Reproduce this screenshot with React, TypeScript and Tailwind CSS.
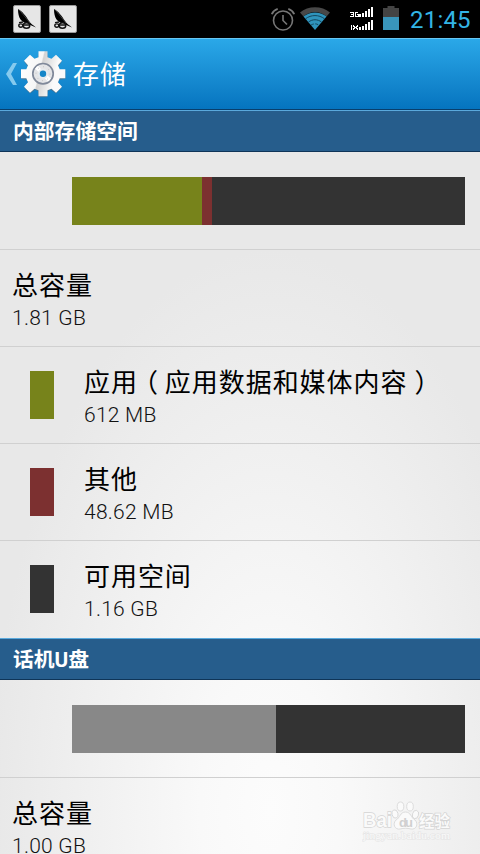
import type { ReactNode } from "react";

const CJK = "font-['Roboto','Noto_Sans_CJK_SC',sans-serif]";

function AppBadge() {
  return (
    <div className="w-7 h-7 rounded-[2px] border border-[#9a9a9a] bg-[#e6e6e6]">
      <svg viewBox="0 0 26 26" className="w-[26px] h-[26px]">
        <path d="M4 3C8 5 12 10 15 15C17 18 19 19 22 21.500L14 18C7 16 4 12 4 3Z" fill="#000" />
        <path d="M5 3.500L16 17" stroke="#777" strokeWidth="0.500" />
        <g fill="#e6e6e6" stroke="#111" strokeWidth="1.400">
          <ellipse cx="6.800" cy="19.600" rx="2" ry="1.700" />
          <ellipse cx="12.500" cy="19.500" rx="3.300" ry="2.800" />
          <path d="M10 19h5M5 16.600l4-.600" />
        </g>
      </svg>
    </div>
  );
}

function AlarmIcon() {
  return (
    <svg viewBox="0 0 24 24" width="24" height="24" fill="none" stroke="#777" strokeWidth="1.600">
      <circle cx="12" cy="13.500" r="9.500" />
      <path d="M12 8v5.500l4 4" />
      <path d="M0.800 7.200C1.800 4.700 3.800 2.700 6.700 1.800M23.200 7.200C22.200 4.700 20.200 2.700 17.300 1.800" strokeWidth="1.900" />
    </svg>
  );
}

function WifiIcon() {
  return (
    <svg viewBox="0 0 30 23" width="30" height="23">
      <path d="M0 5.500C8-1.600 22-1.600 30 5.500L26.500 9.500C20 3.500 10 3.500 3.500 9.500Z" fill="#484848" />
      <path d="M3.500 9.500C10.500 4 19.500 4 26.500 9.500L15 23Z" fill="#2f94bc" />
      <g fill="none" stroke="#14465c" strokeWidth="1">
        <path d="M5.500 11.800C11 7.500 19 7.500 24.500 11.800M8.500 15C12.500 12 17.500 12 21.500 15" />
        <path d="M11 18.200C13.400 16.400 16.600 16.400 19 18.200" strokeDasharray="3 1.500" />
      </g>
    </svg>
  );
}

function Signal({ label, y }: { label: ReactNode; y: number }) {
  return (
    <g transform={`translate(0 ${y})`} shapeRendering="crispEdges">
      {label}
      {[3, 4, 6, 8, 10].map((h, i) => (
        <rect key={h} x={9 + i * 3} y={10 - h} width="2" height={h} fill="#fff" />
      ))}
    </g>
  );
}

function SignalIcons() {
  return (
    <svg viewBox="0 0 24 23" width="24" height="23">
      <Signal
        y={0}
        label={<path d="M0 5.500h3.500v4H0M1 7.500h2.500M8 5.500H5.500v4H8v-2H7" fill="none" stroke="#fff" />}
      />
      <Signal
        y={13}
        label={<path d="M1.500 5v5M3.500 5v1l1 1v1l-1 1v1M7.500 5v1l-1 1v1l1 1v1M4.500 7.500h2" fill="none" stroke="#fff" />}
      />
    </svg>
  );
}

function BatteryIcon() {
  return (
    <svg viewBox="0 0 16 24" width="16" height="24">
      <path d="M4.500 0h7v2H16v9.500H0V2h4.500Z" fill="#444" />
      <path d="M0 11h16v13H0Z" fill="#3995bb" />
    </svg>
  );
}

function GearIcon() {
  return (
    <svg viewBox="0 0 46 48" width="46" height="48">
      <defs>
        <linearGradient id="gear" x1="0" x2="1" y1="0" y2="0.250">
          <stop offset="0" stopColor="#fff" />
          <stop offset="0.490" stopColor="#f6f6f6" />
          <stop offset="0.520" stopColor="#d2d2d2" />
          <stop offset="0.850" stopColor="#fafafa" />
        </linearGradient>
      </defs>
      <g transform="translate(22 23.700)">
        <g fill="#686e74" opacity="0.600" transform="translate(0 1)">
          <circle r="17" />
          {[0, 45, 90, 135].map((a) => (
            <path key={a} d="M-5-17L-4-22.500H4L5-17V17L4 22.500H-4L-5 17Z" transform={`rotate(${a})`} />
          ))}
        </g>
        <path
          d="M-4.500-22.500H4.500V-16.500L8.500-15L13-19L19-13L15-8.500L16.700-4.500H22.300V4.500H16.700L15 8.500L19 13L13 19L8.500 15L4.500 16.500V22.500H-4.500V16.500L-8.500 15L-13 19L-19 13L-15 8.500L-16.700 4.500H-22.300V-4.500H-16.700L-15-8.500L-19-13L-13-19L-8.500-15L-4.500-16.500Z"
          fill="url(#gear)"
        />
        <circle r="10.200" fill="#e4e5e7" stroke="#80899a" strokeWidth="1.700" />
        <path d="M-7-6L7 6M-6-7L6 7" stroke="#fff" strokeWidth="3" />
        <circle r="7" fill="none" stroke="#aaa" strokeWidth="0.800" strokeDasharray="0.800 4.700" />
        <circle r="5" fill="#e6ebef" />
        <circle r="3.200" fill="#1686c8" />
      </g>
    </svg>
  );
}

function SectionHeader({ title }: { title: string }) {
  return (
    <div className="h-[42px] shrink-0 flex items-center px-[13px] pt-[2px] bg-[#265d8c] border-t border-t-[#5aa9dc] border-b border-b-[#0f3558]">
      <p className="text-[20.800px] leading-[30px] font-bold text-white">{title}</p>
    </div>
  );
}

function UsageBar({ parts }: { parts: [number, string][] }) {
  return (
    <div className="h-[98px] shrink-0 pt-[25px] pl-[72px] pr-[15px] border-b border-[#d0d0d0]">
      <div className="flex h-12 bg-[#333333]">
        {parts.map(([width, color]) => (
          <div key={color} className={color} style={{ width }} />
        ))}
      </div>
    </div>
  );
}

function Row({ title, size, color, last }: { title: ReactNode; size: string; color?: string; last?: boolean }) {
  return (
    <div className={`h-[97px] shrink-0 flex ${last ? "" : "border-b border-[#d0d0d0]"}`}>
      {color && <div className={`w-6 h-12 mt-6 ml-[30px] mr-[18px] ${color}`} />}
      <div className="pl-3 pt-4 whitespace-nowrap">
        <p className="text-[26px] leading-10 tracking-[0.950px] text-black">{title}</p>
        <p className="-mt-px text-[21px] leading-[26px] tracking-[0.250px] font-light text-[#111]">{size}</p>
      </div>
    </div>
  );
}

export default function App() {
  return (
    <main
      className={`relative w-[480px] h-[854px] overflow-hidden flex flex-col bg-[radial-gradient(ellipse_280px_560px_at_270px_810px,#fcfcfc,#f9f9f9_25%,#e8e8e8)] ${CJK}`}
    >
      <div className="h-[38px] shrink-0 flex items-start bg-black">
        <div className="flex gap-2 pt-[5px] pl-[13px]">
          <AppBadge />
          <AppBadge />
        </div>
        <div className="ml-auto flex items-start pr-[10px]">
          <div className="mt-[7px]">
            <AlarmIcon />
          </div>
          <div className="mt-[7px] ml-[5px]">
            <WifiIcon />
          </div>
          <div className="mt-[7px] ml-5">
            <SignalIcons />
          </div>
          <div className="mt-[6px] ml-[9px]">
            <BatteryIcon />
          </div>
          <p className="ml-[11px] mt-[5px] w-[60px] text-[24px] leading-[30px] tracking-[0.200px] whitespace-nowrap text-[#33b5e5]">
            21:45
          </p>
        </div>
      </div>

      <div className="h-[72px] shrink-0 flex items-center pl-[6px] bg-gradient-to-b from-[#2aa8e8] to-[#0574bf] border-t border-t-[#68c6f2] border-b border-b-[#083f6d]">
        <svg viewBox="0 0 11 22" width="11" height="22">
          <path d="M7 0H11L5 11L11 22H7L0 11Z" fill="#86caee" />
        </svg>
        <div className="ml-[4px]">
          <GearIcon />
        </div>
        <p className="ml-[6px] pt-[2px] text-[26px] leading-10 tracking-[0.950px] text-white">存储</p>
      </div>

      <SectionHeader title="内部存储空间" />
      <UsageBar
        parts={[
          [130, "bg-[#77831b]"],
          [10, "bg-[#7c3030]"],
        ]}
      />
      <Row title="总容量" size="1.81 GB" />
      <Row
        title={
          <>
            应用<span className="relative -left-[6px]">（</span>应用数据和媒体内容
            <span className="relative left-[7px]">）</span>
          </>
        }
        size="612 MB"
        color="bg-[#77831b]"
      />
      <Row title="其他" size="48.62 MB" color="bg-[#7c3030]" />
      <Row title="可用空间" size="1.16 GB" color="bg-[#333333]" last />

      <SectionHeader title="话机U盘" />
      <UsageBar parts={[[204, "bg-[#888888]"]]} />
      <Row title="总容量" size="1.00 GB" last />

      <div className="absolute left-[362px] top-[798px] w-[92px]">
        <svg viewBox="0 0 92 46" width="92" height="46" fill="#fafafa" stroke="#d4d4d4" strokeWidth="0.800">
          <ellipse cx="38.500" cy="8.500" rx="3.300" ry="4.500" />
          <ellipse cx="48" cy="8.500" rx="3.300" ry="4.500" />
          <ellipse cx="33" cy="16" rx="3" ry="4.200" transform="rotate(-15 33 16)" />
          <ellipse cx="53.500" cy="16.500" rx="3" ry="4.200" transform="rotate(15 53.500 16.500)" />
          <path d="M43.500 14C49 14 49 20 53 22C57 26 54 32 49 31C45 30 42 30 38 31C33 32 30 26 34 22C38 20 38 14 43.500 14Z" />
          <g fontFamily="'Liberation Sans', 'Noto Sans CJK SC', sans-serif" fontWeight="bold" paintOrder="stroke" strokeWidth="1.400">
            <text x="1" y="29" fontSize="20" textLength="29" lengthAdjust="spacingAndGlyphs">Bai</text>
            <text x="37" y="28.500" fontSize="13" textLength="14" fill="#d0d0d0" stroke="none">du</text>
            <text x="57" y="29" fontSize="15.500" textLength="31">经验</text>
            <text x="1" y="40.500" fontSize="10.500" textLength="87" lengthAdjust="spacingAndGlyphs" stroke="#e4e4e4" strokeWidth="1" fontWeight="normal" fontFamily="'Liberation Serif', serif">
              jingyan.baidu.com
            </text>
          </g>
        </svg>
      </div>
    </main>
  );
}
